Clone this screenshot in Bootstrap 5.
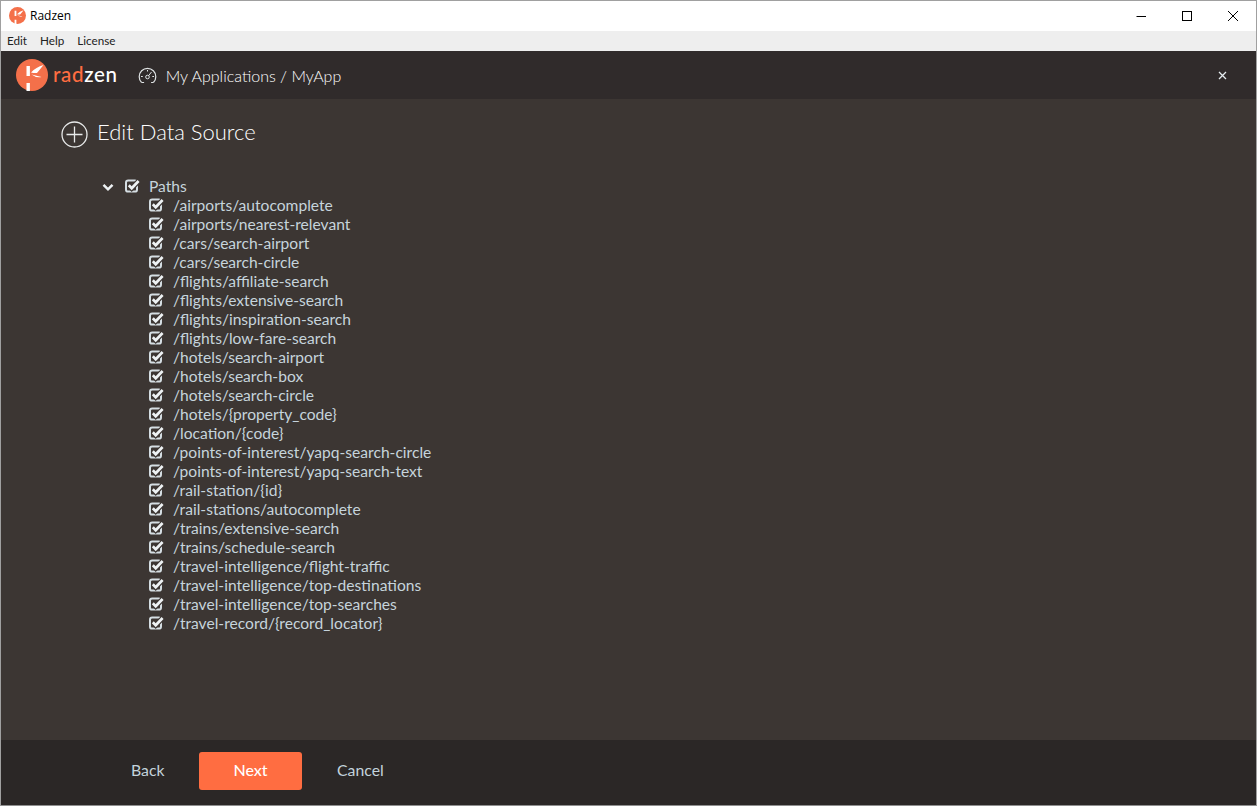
<!DOCTYPE html>
<html lang="en"><head><meta charset="utf-8"><title>Radzen</title>
<link rel="stylesheet" href="https://cdn.jsdelivr.net/npm/bootstrap@5.3.0/dist/css/bootstrap.min.css">
<style>
html,body{height:100%;margin:0;overflow:hidden}
body{font-family:"Lato","Liberation Sans",sans-serif;background:#3c3633}
.win{height:806px;border:1px solid #a0a0a0;border-bottom-color:#8f8f8f;display:flex;flex-direction:column}
.titlebar{height:30px;background:#fff;color:#000;font:12px "Open Sans","Liberation Sans",sans-serif;flex:none;padding-bottom:1px}
.titlebar .ttl{margin-left:4px}
.applogo{margin-left:8px}
.ctl{width:46px;height:30px;display:flex;align-items:center;justify-content:center}
.menubar{height:20px;background:#eee;color:#222;flex:none;padding-left:6px;gap:13px;line-height:18px;font-family:"Lato",sans-serif;font-size:11.7px}
.apphead{height:48px;background:#302b2b;color:#fff;flex:none;padding-left:15px}
.brand1{font-size:20.500px;font-weight:500;letter-spacing:.7px;color:#ff6d41;margin-left:5px;line-height:1;position:relative;top:-1px}
.brand1 span{color:#fff}
.crumb{font-size:16px;font-weight:300;margin-left:9px;position:relative;top:1px}
.gauge{margin-left:20px}
.closex{margin-right:29px}
.mainarea{flex:1 1 auto;background:#3c3633;color:#dfe3e4;min-height:0}
.pagehead{padding:22px 0 0 60px;height:69px;gap:9px;font-size:22px;font-weight:300;color:#fff}
.pagehead span{line-height:22px}
.tree{padding:0 0 0 100px;margin-top:9px;font-size:15.6px;line-height:19px;color:#c6d4dc}
.treerow{height:19px;display:flex;align-items:center}
.leaf{padding-left:48px}
.cb{flex:none;width:15px;height:15px;margin-right:9px;position:relative;top:-1px}
.arrow{flex:none;margin-right:10px;width:14px;height:14px}
.footbar{height:65px;background:#2b2726;flex:none;padding-left:130px;padding-bottom:4px}
.lnk{font-size:15.8px;color:#c3d3dc;text-decoration:none;padding-bottom:2px}
.nextbtn{width:103px;height:38px;background:#ff6d41;border:0;border-radius:3px;color:#fff;font-size:16px;font-weight:500;margin-left:34.500px;margin-right:35px;padding:0 0 2px}
.nextbtn:hover{background:#ff6d41;color:#fff}
</style></head><body>
<svg width="0" height="0" class="d-block" style="height:0"><defs>
<symbol id="chk" viewBox="0 0 15 15"><rect x="1" y="2.600" width="11" height="11" rx="2.200" fill="none" stroke="#d5dee3" stroke-width="2"/><path d="M3.600 7.200 6.700 10.400 13.600 3" fill="none" stroke="#3c3633" stroke-width="5"/><path d="M3.800 7.300 6.700 10.200 13.600 3" fill="none" stroke="#eef2f4" stroke-width="2.700"/></symbol>
</defs></svg>
<div class="win">
<div class="titlebar d-flex align-items-center">
<svg class="applogo" width="17" height="17" viewBox="0 0 32 32"><circle cx="16" cy="16" r="16" fill="#f4704a"/><rect x="10.500" y="7" width="3.400" height="10" fill="#fff"/><rect x="10.500" y="24" width="3.400" height="8" fill="#fff"/><path d="M15 13.500Q20 8 27.500 6 23.500 11 21 14 18 14.200 15 13.500ZM15.500 15.500 25.500 18Q20 19 15.500 15.500Z" fill="#fff"/></svg>
<span class="ttl">Radzen</span>
<div class="ms-auto d-flex">
<div class="ctl"><svg width="12" height="12" viewBox="0 0 12 12"><path d="M1.500 6.500H11" stroke="#000" stroke-width="1"/></svg></div>
<div class="ctl"><svg width="12" height="12" viewBox="0 0 12 12"><rect x="1.500" y="1.500" width="9" height="9" fill="none" stroke="#000"/></svg></div>
<div class="ctl"><svg width="12" height="12" viewBox="0 0 12 12"><path d="M1 1 11 11M11 1 1 11" stroke="#000" stroke-width="1"/></svg></div>
</div></div>
<div class="menubar d-flex"><span>Edit</span><span>Help</span><span>License</span></div>
<header class="apphead d-flex align-items-center">
<svg width="32" height="32" viewBox="0 0 32 32"><circle cx="16" cy="16" r="16" fill="#f4704a"/><rect x="10.500" y="7" width="3.400" height="10" fill="#fff"/><rect x="10.500" y="24" width="3.400" height="8" fill="#fff"/><path d="M15 13.500Q20 8 27.500 6 23.500 11 21 14 18 14.200 15 13.500ZM15.500 15.500 25.500 18Q20 19 15.500 15.500Z" fill="#fff"/></svg>
<span class="brand1">rad<span>zen</span></span>
<svg class="gauge" width="19" height="17" viewBox="0 0 19 17"><path d="M3.600 15.500A8.300 8.300 0 1 1 15.400 15.500" fill="none" stroke="#dfe3e4" stroke-width="1.200"/><path d="M3.600 15.500H15.400" stroke="#dfe3e4" stroke-width="1" stroke-dasharray="2.500 7"/><circle cx="9.500" cy="10" r="1.800" fill="none" stroke="#dfe3e4"/><path d="M10.500 8.800 13.500 5M3 9.500H4.800M14.300 9.500H16M9.500 3V4.500" stroke="#dfe3e4"/></svg>
<span class="crumb">My Applications / MyApp</span>
<svg class="closex ms-auto" width="9" height="9" viewBox="0 0 9 9"><path d="M1 1 8 8M8 1 1 8" stroke="#e6edf0" stroke-width="1.300"/></svg>
</header>
<main class="mainarea">
<div class="pagehead d-flex align-items-start">
<svg width="27" height="27" viewBox="0 0 27 27"><circle cx="13.500" cy="13.500" r="12.500" fill="none" stroke="#e8eaea" stroke-width="1.300"/><path d="M13.500 5.500V21.500M5.500 13.500H21.500" stroke="#e8eaea" stroke-width="1.300"/></svg>
<span>Edit Data Source</span></div>
<div class="tree">
<div class="treerow"><svg class="arrow" viewBox="0 0 14 14"><path d="M2.500 4.800 7 9.300 11.500 4.800" fill="none" stroke="#eef2f4" stroke-width="2.500"/></svg><svg class="cb"><use href="#chk"/></svg><span>Paths</span></div>
<div class="treerow leaf"><svg class="cb"><use href="#chk"/></svg><span>/airports/autocomplete</span></div>
<div class="treerow leaf"><svg class="cb"><use href="#chk"/></svg><span>/airports/nearest-relevant</span></div>
<div class="treerow leaf"><svg class="cb"><use href="#chk"/></svg><span>/cars/search-airport</span></div>
<div class="treerow leaf"><svg class="cb"><use href="#chk"/></svg><span>/cars/search-circle</span></div>
<div class="treerow leaf"><svg class="cb"><use href="#chk"/></svg><span>/flights/affiliate-search</span></div>
<div class="treerow leaf"><svg class="cb"><use href="#chk"/></svg><span>/flights/extensive-search</span></div>
<div class="treerow leaf"><svg class="cb"><use href="#chk"/></svg><span>/flights/inspiration-search</span></div>
<div class="treerow leaf"><svg class="cb"><use href="#chk"/></svg><span>/flights/low-fare-search</span></div>
<div class="treerow leaf"><svg class="cb"><use href="#chk"/></svg><span>/hotels/search-airport</span></div>
<div class="treerow leaf"><svg class="cb"><use href="#chk"/></svg><span>/hotels/search-box</span></div>
<div class="treerow leaf"><svg class="cb"><use href="#chk"/></svg><span>/hotels/search-circle</span></div>
<div class="treerow leaf"><svg class="cb"><use href="#chk"/></svg><span>/hotels/{property_code}</span></div>
<div class="treerow leaf"><svg class="cb"><use href="#chk"/></svg><span>/location/{code}</span></div>
<div class="treerow leaf"><svg class="cb"><use href="#chk"/></svg><span>/points-of-interest/yapq-search-circle</span></div>
<div class="treerow leaf"><svg class="cb"><use href="#chk"/></svg><span>/points-of-interest/yapq-search-text</span></div>
<div class="treerow leaf"><svg class="cb"><use href="#chk"/></svg><span>/rail-station/{id}</span></div>
<div class="treerow leaf"><svg class="cb"><use href="#chk"/></svg><span>/rail-stations/autocomplete</span></div>
<div class="treerow leaf"><svg class="cb"><use href="#chk"/></svg><span>/trains/extensive-search</span></div>
<div class="treerow leaf"><svg class="cb"><use href="#chk"/></svg><span>/trains/schedule-search</span></div>
<div class="treerow leaf"><svg class="cb"><use href="#chk"/></svg><span>/travel-intelligence/flight-traffic</span></div>
<div class="treerow leaf"><svg class="cb"><use href="#chk"/></svg><span>/travel-intelligence/top-destinations</span></div>
<div class="treerow leaf"><svg class="cb"><use href="#chk"/></svg><span>/travel-intelligence/top-searches</span></div>
<div class="treerow leaf"><svg class="cb"><use href="#chk"/></svg><span>/travel-record/{record_locator}</span></div>
</div>
</main>
<footer class="footbar d-flex align-items-center">
<a class="lnk" href="#">Back</a>
<button type="button" class="btn nextbtn">Next</button>
<a class="lnk" href="#">Cancel</a>
</footer>
</div>
<script src="https://cdn.jsdelivr.net/npm/bootstrap@5.3.0/dist/js/bootstrap.bundle.min.js"></script>
</body></html>
